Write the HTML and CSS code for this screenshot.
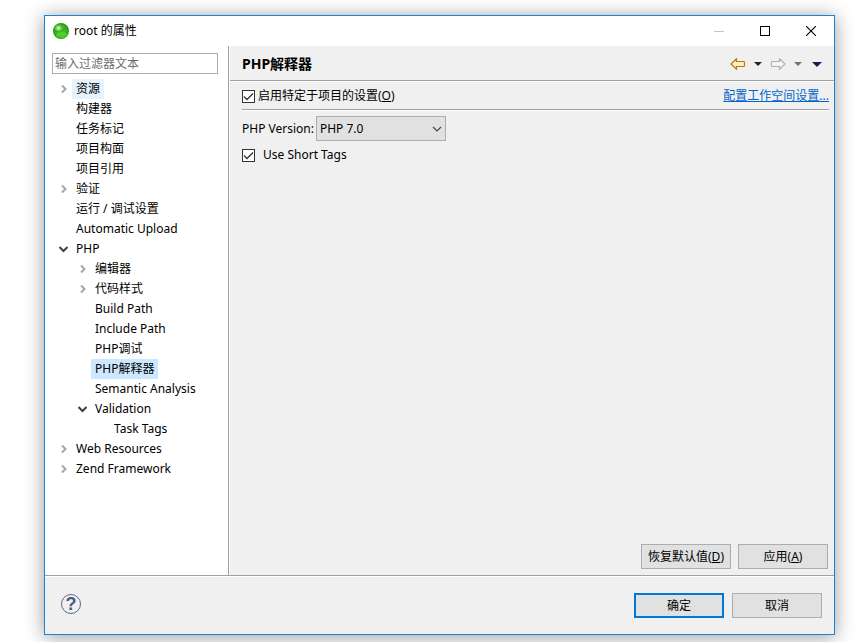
FILE: index.html
```html
<!DOCTYPE html>
<html lang="zh-CN">
<head>
  <meta charset="UTF-8">
  <meta name="viewport" content="width=device-width, initial-scale=1.0">
  <title>root 的属性</title>
  <link rel="stylesheet" href="styles.css">
</head>
<body>

  <!-- Shared tree arrows -->
  <svg class="symbols" aria-hidden="true">
    <symbol id="closed" viewBox="0 0 10 10"><path d="M3 1.5 L6.5 5 L3 8.5" fill="none" stroke="#a6a6a6" stroke-width="2"/></symbol>
    <symbol id="open" viewBox="0 0 10 10"><path d="M0.5 3 L4.5 7 L8.5 3" fill="none" stroke="#404040" stroke-width="2"/></symbol>
  </svg>

  <div class="window">
    <header class="titlebar">
      <svg class="app-icon" viewBox="0 0 16 16" aria-hidden="true">
        <defs>
          <radialGradient id="ball" cx="0.5" cy="0.5" r="0.5">
            <stop offset="0" stop-color="#4cc62c"/>
            <stop offset="0.75" stop-color="#35b01c"/>
            <stop offset="1" stop-color="#279014"/>
          </radialGradient>
          <radialGradient id="shine">
            <stop offset="0" stop-color="#f0ffe6"/>
            <stop offset="1" stop-color="#8be868" stop-opacity="0"/>
          </radialGradient>
        </defs>
        <circle cx="8" cy="8" r="8" fill="url(#ball)"/>
        <ellipse cx="9" cy="12" rx="6" ry="3" fill="#5cdc30" opacity="0.6"/>
        <path d="M1 8 Q6 10 10 7 T15 6" fill="none" stroke="#23870f" stroke-width="1" opacity="0.5"/>
        <ellipse cx="5.5" cy="5" rx="4.5" ry="4" fill="url(#shine)"/>
      </svg>
      <h1 class="title">root 的属性</h1>
      <button class="win-btn" aria-label="最小化" disabled>
        <svg viewBox="0 0 10 10"><path d="M0 5.5 H10" stroke="#c4c4c4"/></svg>
      </button>
      <button class="win-btn" aria-label="最大化">
        <svg viewBox="0 0 10 10"><rect x="0.5" y="0.5" width="9" height="9" fill="none" stroke="#000"/></svg>
      </button>
      <button class="win-btn" aria-label="关闭">
        <svg viewBox="0 0 10 10"><path d="M0 0 L10 10 M10 0 L0 10" stroke="#000" stroke-width="1.1"/></svg>
      </button>
    </header>

    <div class="main">
      <nav class="sidebar">
        <input class="filter" type="text" placeholder="输入过滤器文本" aria-label="输入过滤器文本">
        <ul class="tree">
          <li><div class="row"><button class="toggle" aria-label="展开"><svg><use href="#closed"/></svg></button><span class="label hover">资源</span></div></li>
          <li><div class="row"><span class="label">构建器</span></div></li>
          <li><div class="row"><span class="label">任务标记</span></div></li>
          <li><div class="row"><span class="label">项目构面</span></div></li>
          <li><div class="row"><span class="label">项目引用</span></div></li>
          <li><div class="row"><button class="toggle" aria-label="展开"><svg><use href="#closed"/></svg></button><span class="label">验证</span></div></li>
          <li><div class="row"><span class="label">运行 / 调试设置</span></div></li>
          <li><div class="row"><span class="label">Automatic Upload</span></div></li>
          <li>
            <div class="row"><button class="toggle" aria-label="折叠"><svg><use href="#open"/></svg></button><span class="label">PHP</span></div>
            <ul>
              <li><div class="row"><button class="toggle" aria-label="展开"><svg><use href="#closed"/></svg></button><span class="label">编辑器</span></div></li>
              <li><div class="row"><button class="toggle" aria-label="展开"><svg><use href="#closed"/></svg></button><span class="label">代码样式</span></div></li>
              <li><div class="row"><span class="label">Build Path</span></div></li>
              <li><div class="row"><span class="label">Include Path</span></div></li>
              <li><div class="row"><span class="label">PHP调试</span></div></li>
              <li><div class="row"><span class="label selected">PHP解释器</span></div></li>
              <li><div class="row"><span class="label">Semantic Analysis</span></div></li>
              <li>
                <div class="row"><button class="toggle" aria-label="折叠"><svg><use href="#open"/></svg></button><span class="label">Validation</span></div>
                <ul>
                  <li><div class="row"><span class="label">Task Tags</span></div></li>
                </ul>
              </li>
            </ul>
          </li>
          <li><div class="row"><button class="toggle" aria-label="展开"><svg><use href="#closed"/></svg></button><span class="label">Web Resources</span></div></li>
          <li><div class="row"><button class="toggle" aria-label="展开"><svg><use href="#closed"/></svg></button><span class="label">Zend Framework</span></div></li>
        </ul>
      </nav>

      <section class="page">
        <div class="page-header">
          <h2>PHP解释器</h2>
          <div class="history">
            <button class="arrow" aria-label="后退">
              <svg viewBox="0 0 16 12"><path d="M1 6 L6.5 0.8 V3.5 H13.5 Q14.5 3.5 14.5 4.5 V7.5 Q14.5 8.5 13.5 8.5 H6.5 V11.2 Z" fill="#fff0b8" stroke="#b8741a" stroke-width="1.2"/></svg>
            </button>
            <button class="drop" aria-label="后退列表"><svg viewBox="0 0 8 4"><path d="M0 0 H8 L4 4 Z" fill="#222"/></svg></button>
            <button class="arrow" aria-label="前进" disabled>
              <svg viewBox="0 0 16 12"><path d="M15 6 L9.5 0.8 V3.5 H2.5 Q1.5 3.5 1.5 4.5 V7.5 Q1.5 8.5 2.5 8.5 H9.5 V11.2 Z" fill="#f5f5f5" stroke="#b0b0b0" stroke-width="1.2"/></svg>
            </button>
            <button class="drop" aria-label="前进列表"><svg viewBox="0 0 8 4"><path d="M0 0 H8 L4 4 Z" fill="#707070"/></svg></button>
            <button class="drop menu" aria-label="菜单"><svg viewBox="0 0 10 5"><path d="M0 0 H10 L5 5 Z" fill="#24184e"/></svg></button>
          </div>
        </div>

        <div class="page-body">
          <div class="project-row">
            <label class="check"><input type="checkbox" checked><span>启用特定于项目的设置(<u>O</u>)</span></label>
            <a href="#">配置工作空间设置...</a>
          </div>
          <div class="version-row">
            <label for="version">PHP Version:</label>
            <select id="version">
              <option>PHP 7.0</option>
            </select>
          </div>
          <label class="check spaced"><input type="checkbox" checked><span>Use Short Tags</span></label>
          <div class="page-buttons">
            <button class="btn">恢复默认值(<u>D</u>)</button>
            <button class="btn">应用(<u>A</u>)</button>
          </div>
        </div>
      </section>
    </div>

    <footer class="footer">
      <button class="help" aria-label="帮助">?</button>
      <button class="btn primary">确定</button>
      <button class="btn">取消</button>
    </footer>
  </div>

</body>
</html>
```
FILE: styles.css
```css
* {
  margin: 0;
  padding: 0;
  box-sizing: border-box;
}

body {
  font-family: 'Noto Sans', 'Noto Sans CJK SC', sans-serif;
  font-size: 12px;
  line-height: 20px;
  color: #000;
  background-color: #fff;
  display: flex;
  min-height: 100vh;
  padding: 15px 32px 7px 44px;
  overflow: hidden;
}

button,
input,
select {
  font: inherit;
  color: inherit;
}

button {
  border: none;
  background: none;
}

svg {
  display: block;
}

ul {
  list-style: none;
}

.symbols {
  display: none;
}

.window {
  flex: 1;
  display: flex;
  flex-direction: column;
  background-color: #f0f0f0;
  border: 1px solid #1883d7;
  box-shadow: 0 2px 18px rgba(0, 0, 0, 0.4);
}

/* Title bar */
.titlebar {
  display: flex;
  align-items: center;
  height: 30px;
  padding-left: 8px;
  background-color: #fff;
}

.app-icon {
  width: 16px;
  height: 16px;
}

.title {
  flex: 1;
  margin-left: 5px;
  font-size: 12px;
  font-weight: normal;
}

.win-btn {
  width: 46px;
  height: 28px;
  display: flex;
  justify-content: center;
  align-items: center;
}

.win-btn svg {
  width: 10px;
  height: 10px;
}

.main {
  flex: 1;
  display: flex;
  border-bottom: 1px solid #a0a0a0;
}

/* Left side with the tree */
.sidebar {
  width: 184px;
  padding: 7px 10px 0 7px;
  background-color: #fff;
  border-right: 1px solid #a0a0a0;
}

.filter {
  display: block;
  width: 100%;
  height: 21px;
  padding: 0 2px;
  border: 1px solid #abadb3;
  background-color: #fff;
}

.filter::placeholder {
  color: #6d6d6d;
}

.tree {
  margin-top: 5px;
}

.tree ul {
  padding-left: 19px;
}

.row {
  position: relative;
  display: flex;
  height: 20px;
  padding-left: 20px;
  white-space: nowrap;
}

.toggle {
  position: absolute;
  left: 7px;
  top: 5px;
}

.toggle svg {
  width: 10px;
  height: 10px;
}

.label {
  padding: 0 4px;
}

.label.hover {
  background-color: #e5f3ff;
}

.label.selected {
  background-color: #cce8ff;
}

/* Right side */
.page {
  flex: 1;
  display: flex;
  flex-direction: column;
  border-left: 1px solid #fff;
}

.page-header {
  display: flex;
  justify-content: space-between;
  align-items: center;
  height: 35px;
  padding: 2px 12px 0;
  border-bottom: 1px solid #a0a0a0;
  box-shadow: 0 1px 0 #fff;
}

.page-header h2 {
  font-size: 14px;
  font-weight: bold;
}

.history {
  display: flex;
  align-items: center;
  gap: 8px;
}

.arrow svg {
  width: 16px;
  height: 12px;
}

.drop svg {
  width: 8px;
  height: 4px;
}

.drop.menu {
  margin-left: 2px;
}

.drop.menu svg {
  width: 10px;
  height: 5px;
}

.page-body {
  flex: 1;
  display: flex;
  flex-direction: column;
  align-items: flex-start;
  padding: 5px 5px 6px 12px;
}

.project-row {
  align-self: stretch;
  display: flex;
  justify-content: space-between;
  height: 24px;
  border-bottom: 1px solid #a0a0a0;
  box-shadow: 0 1px 0 #fff;
}

.project-row a {
  height: 20px;
  color: #0066cc;
}

.check {
  display: flex;
  align-items: center;
  gap: 3px;
  height: 20px;
}

.check.spaced {
  gap: 8px;
  margin-top: 4px;
}

.check input {
  appearance: none;
  width: 13px;
  height: 13px;
  border: 1px solid #333;
  background-color: #fff;
}

.check input:checked {
  background-image: url("data:image/svg+xml,%3Csvg xmlns='http://www.w3.org/2000/svg' viewBox='0 0 11 11'%3E%3Cpath d='M1 5.5 L4 8.5 L10 2.5' fill='none' stroke='%23333' stroke-width='1.3'/%3E%3C/svg%3E");
}

.version-row {
  display: flex;
  align-items: center;
  gap: 2px;
  margin-top: 6px;
}

.version-row select {
  appearance: none;
  width: 130px;
  height: 25px;
  padding: 0 3px;
  border: 1px solid #adadad;
  border-radius: 0;
  background: #e1e1e1 url("data:image/svg+xml,%3Csvg xmlns='http://www.w3.org/2000/svg' viewBox='0 0 10 6'%3E%3Cpath d='M1 1 L5 5 L9 1' fill='none' stroke='%23444' stroke-width='1.2'/%3E%3C/svg%3E") no-repeat right 3px center / 10px 6px;
}

.page-buttons {
  display: flex;
  align-self: flex-end;
  gap: 7px;
  margin-top: auto;
  margin-right: 1px;
}

.btn {
  width: 90px;
  height: 25px;
  border: 1px solid #adadad;
  background-color: #e1e1e1;
  white-space: nowrap;
}

.btn.primary {
  border: 2px solid #0078d7;
}

/* Bottom bar */
.footer {
  display: flex;
  align-items: center;
  gap: 8px;
  height: 58px;
  padding: 0 12px 0 16px;
  border-top: 1px solid #fff;
}

.help {
  width: 20px;
  height: 20px;
  margin-right: auto;
  margin-bottom: 3px;
  border: 1px solid #5a6b8c;
  border-radius: 50%;
  color: #4a5a80;
  font-family: 'Liberation Sans', sans-serif;
  font-size: 18px;
  font-weight: bold;
  line-height: 18px;
}
```
